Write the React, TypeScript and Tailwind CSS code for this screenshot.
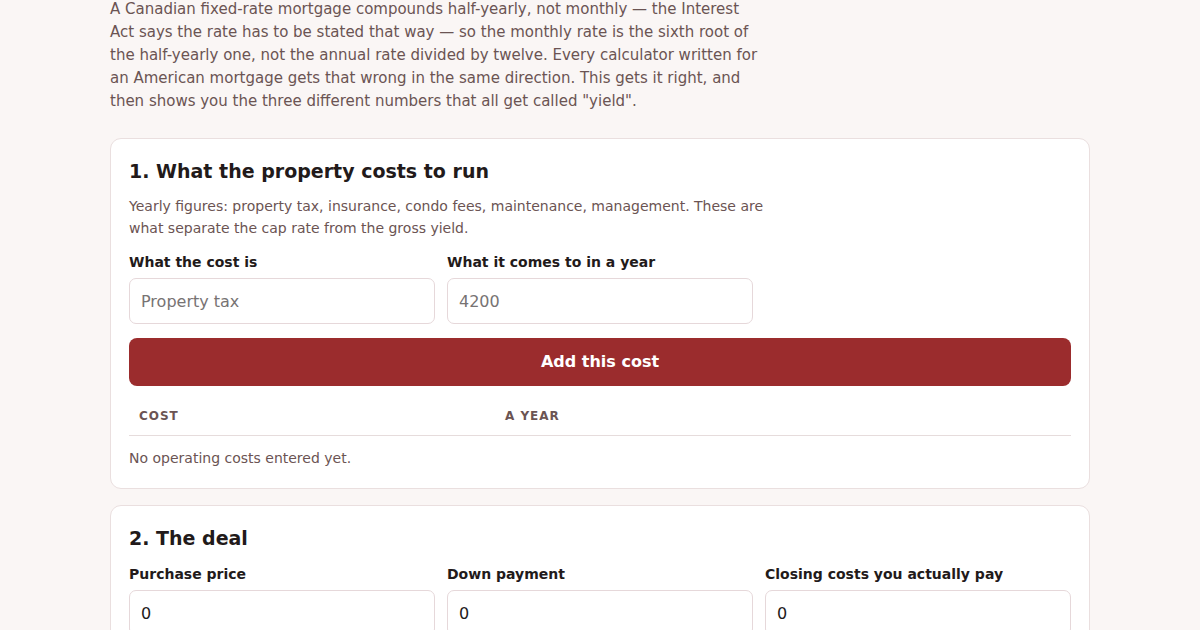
import React from 'react';

const font = { fontFamily: '"DejaVu Sans", sans-serif' };

function Field({ label, placeholder, value }: { label: string; placeholder?: string; value?: string }) {
  return (
    <label className="flex flex-col gap-[6px]">
      <span className="text-[14px] leading-[20px] font-bold text-[#221a1a]">{label}</span>
      <input
        className="h-[46px] w-full rounded-[7px] border border-[#e6d8da] bg-white px-[11px] text-[16px] text-[#221a1a] placeholder:text-[#777373] outline-none"
        placeholder={placeholder}
        defaultValue={value}
        style={font}
      />
    </label>
  );
}

export default function App() {
  return (
    <div className="min-h-[630px] w-full overflow-hidden bg-[#faf6f5]" style={font}>
      <div className="mx-auto w-[980px]">
        <p className="-mt-[2px] max-w-[650px] text-[15px] leading-[23px] text-[#6b5453]">
          A Canadian fixed-rate mortgage compounds half-yearly, not monthly — the Interest Act says the rate has to be
          stated that way — so the monthly rate is the sixth root of the half-yearly one, not the annual rate divided by
          twelve. Every calculator written for an American mortgage gets that wrong in the same direction. This gets it
          right, and then shows you the three different numbers that all get called "yield".
        </p>

        {/* Section 1 */}
        <section className="mt-[25px] rounded-[11px] border border-[#eadfdf] bg-white px-[18px] pt-[18px] pb-[20px]">
          <h2 className="text-[19px] leading-[28px] font-bold text-[#221a1a]">1. What the property costs to run</h2>
          <p className="mt-[10px] max-w-[650px] text-[14px] leading-[22px] text-[#6b5453]">
            Yearly figures: property tax, insurance, condo fees, maintenance, management. These are what separate the cap
            rate from the gross yield.
          </p>
          <div className="mt-[13px] grid grid-cols-3 gap-[12px]">
            <Field label="What the cost is" placeholder="Property tax" />
            <Field label="What it comes to in a year" placeholder="4200" />
          </div>
          <button
            className="mt-[14px] h-[48px] w-full rounded-[8px] bg-[#9b2c2d] text-[16px] font-bold text-white"
            style={font}
          >
            Add this cost
          </button>
          <div className="mt-[11px] grid grid-cols-[366px_1fr] border-b border-[#e6dcdc] text-[12px] leading-[18px] font-bold tracking-[0.08em] text-[#6b5453] uppercase">
            <div className="px-[10px] py-[10px]">Cost</div>
            <div className="px-[10px] py-[10px]">A year</div>
          </div>
          <p className="mt-[12px] text-[14px] leading-[20px] text-[#6b5453]">No operating costs entered yet.</p>
        </section>

        {/* Section 2 */}
        <section className="mt-[16px] rounded-[11px] border border-[#eadfdf] bg-white px-[18px] pt-[18px] pb-[19px]">
          <h2 className="text-[19px] leading-[28px] font-bold text-[#221a1a]">2. The deal</h2>
          <div className="mt-[12px] grid grid-cols-3 gap-[12px]">
            <Field label="Purchase price" value="0" />
            <Field label="Down payment" value="0" />
            <Field label="Closing costs you actually pay" value="0" />
          </div>
        </section>
      </div>
    </div>
  );
}
